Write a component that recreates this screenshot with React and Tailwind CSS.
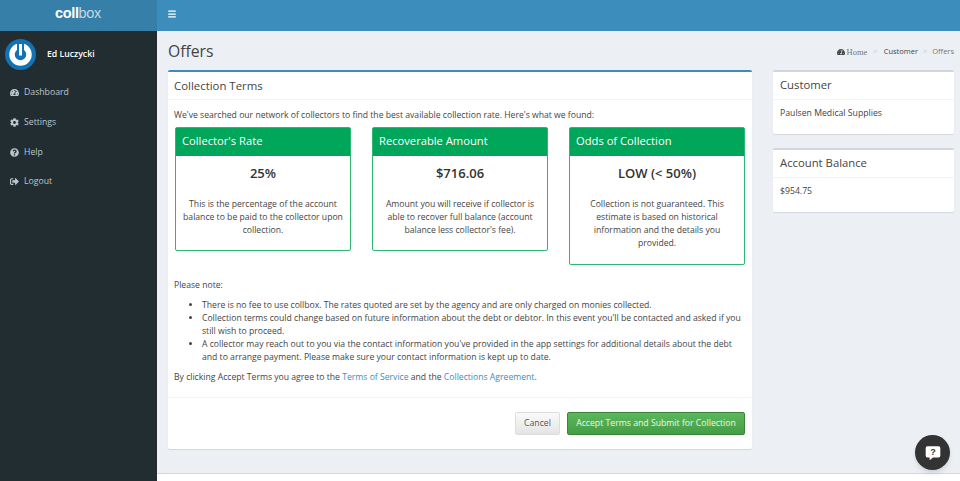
import { Menu } from 'lucide-react';
import { FaCog, FaQuestionCircle, FaSignOutAlt, FaTachometerAlt } from 'react-icons/fa';

const navItems = [
  { label: 'Dashboard', icon: FaTachometerAlt },
  { label: 'Settings', icon: FaCog },
  { label: 'Help', icon: FaQuestionCircle },
  { label: 'Logout', icon: FaSignOutAlt },
];

const terms = [
  {
    title: "Collector's Rate",
    value: '25%',
    text: 'This is the percentage of the account balance to be paid to the collector upon collection.',
    height: 'h-[124px]',
  },
  {
    title: 'Recoverable Amount',
    value: '$716.06',
    text: "Amount you will receive if collector is able to recover full balance (account balance less collector's fee).",
    height: 'h-[124px]',
  },
  {
    title: 'Odds of Collection',
    value: 'LOW (< 50%)',
    text: 'Collection is not guaranteed. This estimate is based on historical information and the details you provided.',
    height: 'h-[138px]',
  },
];

function SideBox({ title, children, className }) {
  return (
    <div className={`bg-white rounded-[2px] border-t-[2px] border-[#d2d6de] shadow-[0_1px_1px_rgba(0,0,0,0.1)] ${className}`}>
      <div className="h-[28px] px-[7px] pb-[1px] flex items-center text-[11.300px] text-[#444] border-b border-[#f4f4f4]">{title}</div>
      <div className="h-[34px] px-[7px] pt-[7px] text-[8.700px] text-[#444]">{children}</div>
    </div>
  );
}

export default function App() {
  return (
    <div className="h-[481px] w-[960px] overflow-hidden flex font-['Open_Sans',sans-serif] text-[#333] relative">
      <aside className="w-[157px] shrink-0 bg-[#222d32] flex flex-col">
        <div className="h-[31px] bg-[#367fa9] flex items-center justify-center pb-[3px] pr-[1px] text-[14.500px] text-white tracking-tight font-['Liberation_Sans',sans-serif]">
          <span className="font-bold">coll</span>
          <span className="text-white/70">box</span>
        </div>
        <div className="h-[46px] flex items-center pl-[5px]">
          <div className="w-[31px] h-[31px] rounded-full bg-[#1272b3] flex items-center justify-center">
            <svg width="31" height="31" viewBox="0 0 31 31">
              <circle cx="15.5" cy="15.5" r="8.500" fill="none" stroke="#fff" strokeWidth="5.500" />
              <rect x="12" y="3" width="7" height="11" fill="#1272b3" />
              <rect x="14" y="5" width="3" height="11.500" fill="#fff" />
            </svg>
          </div>
          <span className="ml-[11px] mt-[1px] text-[8.700px] font-semibold text-white">Ed Luczycki</span>
        </div>
        <nav className="mt-[1px] flex flex-col">
          {navItems.map(({ label, icon: Icon }) => (
            <div key={label} className="h-[29.700px] flex items-center pl-[10px] text-[#b8c7ce] text-[8.700px]">
              <Icon size={9} className="w-[9px] mr-[5px]" />
              <span>{label}</span>
            </div>
          ))}
        </nav>
      </aside>

      <div className="flex-1 flex flex-col bg-[#ecf0f5] min-w-0">
        <header className="h-[31px] shrink-0 bg-[#3c8dbc] flex items-center pl-[10px] pb-[3px]">
          <Menu size={10} strokeWidth={3} className="text-white" />
        </header>

        <div className="flex-1 px-[11px]">
          <div className="flex items-center justify-between h-[39px]">
            <h1 className="text-[15.700px] text-[#444] pt-[2px]">Offers</h1>
            <div className="flex items-center text-[7.500px] mr-[-5px] pt-[3px] text-[#444]">
              <FaTachometerAlt size={8} className="mr-[2px]" />
              <span className="font-['Liberation_Serif',serif] text-[8.500px] text-[#777]">Home</span>
              <span className="mx-[6px] text-[#ccc]">&gt;</span>
              <span>Customer</span>
              <span className="mx-[5px] text-[#ccc]">&gt;</span>
              <span className="text-[#777]">Offers</span>
            </div>
          </div>

          <div className="flex items-start">
            <section className="w-[584px] shrink-0 bg-white rounded-[2px] border-t-[2px] border-[#3c8dbc] shadow-[0_1px_1px_rgba(0,0,0,0.1)]">
              <div className="h-[28px] px-[6px] flex items-center text-[11.400px] text-[#444] border-b border-[#f4f4f4]">Collection Terms</div>
              <div className="px-[7px] pt-[9px] text-[8.650px] h-[297px] text-[#444]">
                <p className="-ml-[1px]">We've searched our network of collectors to find the best available collection rate. Here's what we found:</p>
                <div className="grid grid-cols-3 gap-[21px] mt-[5px] items-start h-[138px]">
                  {terms.map((term) => (
                    <div key={term.title} className={`${term.height} bg-white border border-[#2fb673] rounded-[2px] flex flex-col`}>
                      <div className="h-[28px] shrink-0 bg-[#00a65a] px-[6px] pb-[1px] flex items-center text-white text-[11.200px]">{term.title}</div>
                      <div className="px-[7px] text-center">
                        <div className="text-[13px] font-semibold mt-[8px] mb-[15px] text-[#333]">{term.value}</div>
                        <p className="leading-[13px]">{term.text}</p>
                      </div>
                    </div>
                  ))}
                </div>
                <p className="mt-[14px] -ml-[1px]">Please note:</p>
                <ul className="list-disc pl-[27px] mt-[7px] leading-[13px]">
                  <li>There is no fee to use collbox. The rates quoted are set by the agency and are only charged on monies collected.</li>
                  <li>Collection terms could change based on future information about the debt or debtor. In this event you'll be contacted and asked if you still wish to proceed.</li>
                  <li>A collector may reach out to you via the contact information you've provided in the app settings for additional details about the debt and to arrange payment. Please make sure your contact information is kept up to date.</li>
                </ul>
                <p className="mt-[7px] -ml-[1px]">
                  By clicking Accept Terms you agree to the <span className="text-[#3c8dbc]">Terms of Service</span> and the <span className="text-[#3c8dbc]">Collections Agreement</span>.
                </p>
              </div>
              <div className="h-[52px] border-t border-[#f4f4f4] flex items-start justify-end gap-[7px] pt-[14px] pr-[7px]">
                <button className="h-[23px] w-[45px] rounded-[2px] border border-[#ddd] bg-gradient-to-b from-[#fafafa] to-[#e4e4e4] text-[8.700px] text-[#555]">Cancel</button>
                <button className="h-[23px] w-[178px] rounded-[2px] border border-[#398439] bg-gradient-to-b from-[#5cb85c] to-[#449d44] text-[8.700px] text-white/90">Accept Terms and Submit for Collection</button>
              </div>
            </section>

            <div className="w-[181px] ml-[21px] shrink-0 flex flex-col">
              <SideBox title="Customer">Paulsen Medical Supplies</SideBox>
              <SideBox title="Account Balance" className="mt-[14px]">$954.75</SideBox>
            </div>
          </div>
        </div>

        <footer className="h-[8px] shrink-0 bg-white border-t border-[#d2d6de]" />
      </div>

      <div className="absolute right-[10px] bottom-[11px] w-[35px] h-[35px] rounded-full bg-[#333] shadow-md flex items-center justify-center">
        <svg width="18" height="18" viewBox="0 0 16 16">
          <path d="M3 2h10a1.500 1.500 0 0 1 1.500 1.500v7a1.500 1.500 0 0 1-1.500 1.500H8l-3 2.500V12H3a1.500 1.500 0 0 1-1.500-1.500v-7A1.500 1.500 0 0 1 3 2z" fill="#fff" />
          <text x="8" y="10" textAnchor="middle" fontSize="8" fontWeight="700" fill="#333" fontFamily="Liberation Sans, sans-serif">?</text>
        </svg>
      </div>
    </div>
  );
}
